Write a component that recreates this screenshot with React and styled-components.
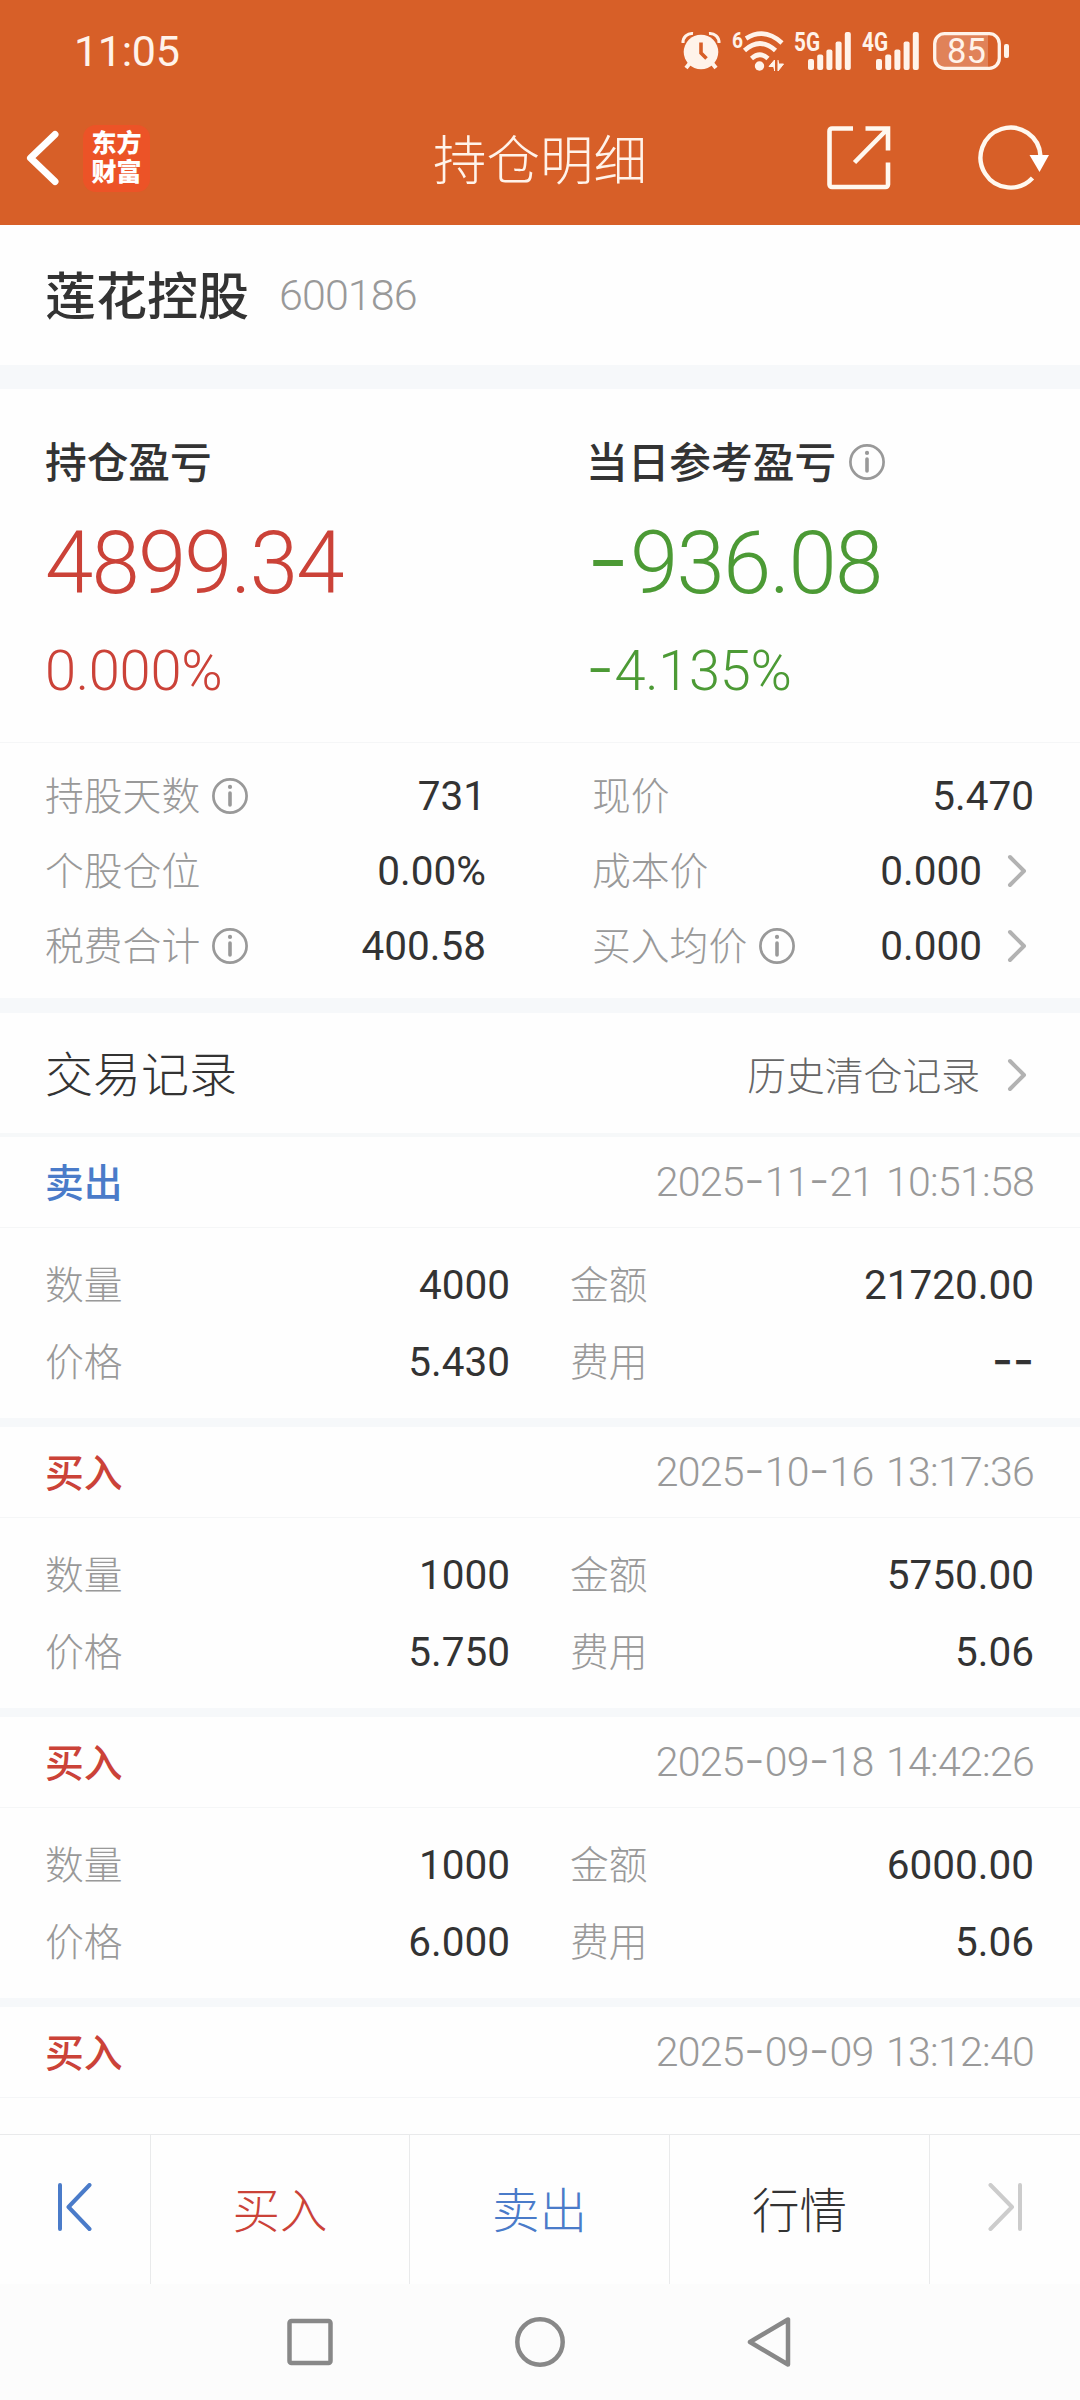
import React from 'react';
import styled, { createGlobalStyle } from 'styled-components';

const GlobalStyle = createGlobalStyle`
  * {
    box-sizing: border-box;
  }

  body {
    margin: 0;
    background: #fefefe;
    font-family: Roboto, 'Noto Sans CJK SC', sans-serif;
    color: #333;
  }
`;

const colors = {
  orange: '#d75f28',
  cream: '#fff3ea',
  red: '#cb4238',
  green: '#4c9a35',
  blue: '#4a7bc9',
  dark: '#333333',
  gray: '#999999',
};

// Styled components
const Screen = styled.div`
  width: 1080px;
  height: 2400px;
  display: flex;
  flex-direction: column;
  overflow: hidden;
`;

const Header = styled.header`
  height: 225px;
  flex: none;
  background: ${colors.orange};
`;

const StatusBar = styled.div`
  height: 102px;
  display: flex;
  align-items: center;
  justify-content: space-between;
  padding: 0 71px 0 74px;
`;

const Time = styled.span`
  font-size: 43px;
  line-height: 50px;
  letter-spacing: -0.3px;
  color: ${colors.cream};
`;

const StatusIcons = styled.div`
  display: flex;
  align-items: center;

  svg {
    display: block;
    overflow: visible;
  }
`;

const Spacer = styled.span`
  width: ${(props) => props.$w}px;
`;

const TitleBar = styled.div`
  height: 112px;
  display: grid;
  grid-template-columns: 1fr auto 1fr;
  align-items: center;
  padding: 0 30px 0 25px;
`;

const TitleLeft = styled.div`
  display: flex;
  align-items: center;
  gap: 21px;
`;

const TitleRight = styled.div`
  display: flex;
  align-items: center;
  justify-content: flex-end;
  gap: 87px;
`;

const Title = styled.h1`
  margin: 0;
  padding: 8px 0 0 5px;
  font-size: 53.5px;
  font-weight: 300;
  line-height: 60px;
  color: ${colors.cream};
`;

const AppBadge = styled.div`
  width: 67px;
  height: 67px;
  border-radius: 13px;
  background: #ec5327;
  color: #fff;
  display: grid;
  place-content: center;
  text-align: center;
  font-size: 25px;
  font-weight: 900;
  line-height: 29px;
`;

const StockBar = styled.div`
  height: 140px;
  flex: none;
  display: flex;
  align-items: center;
  gap: 30px;
  padding: 0 45px;
`;

const StockName = styled.span`
  padding-top: 5px;
  font-size: 51px;
  font-weight: 500;
  line-height: 60px;
`;

const StockCode = styled.span`
  font-size: 43px;
  font-weight: 300;
  line-height: 50px;
  letter-spacing: -0.9px;
  color: ${colors.gray};
`;

const Band = styled.div`
  flex: none;
  height: ${(props) => props.$size}px;
  background: #f6f8fa;
`;

// Han glyphs sit low in their line box
const Han = styled.span`
  padding-bottom: 5px;
`;

const Profits = styled.section`
  flex: none;
  height: 354px;
  display: grid;
  grid-template-columns: 541px 1fr;
  padding: 52px 45px 0;
  border-bottom: 1px solid #f5f6f7;
`;

const ProfitCaption = styled.div`
  height: 42px;
  display: flex;
  align-items: center;
  gap: 13px;
  font-size: 41.7px;
  font-weight: 500;
`;

const ProfitAmount = styled.div`
  margin-top: 30px;
  font-size: 87px;
  font-weight: 300;
  line-height: 100px;
  letter-spacing: -1.8px;
  color: ${(props) => props.$color};
`;

const ProfitRate = styled.div`
  margin-top: 28px;
  font-size: 56px;
  font-weight: 300;
  line-height: 60px;
  letter-spacing: -0.3px;
  color: ${(props) => props.$color};
`;

const Stats = styled.section`
  flex: none;
  height: 255px;
  display: grid;
  grid-template-columns: 441px 442px;
  grid-auto-rows: 75px;
  column-gap: 106px;
  padding: 15px 46px 0 45px;
`;

const Field = styled.div`
  display: flex;
  align-items: center;
  justify-content: space-between;
`;

const FieldLabel = styled.span`
  display: flex;
  align-items: center;
  gap: 12px;
  font-size: 38.8px;
  font-weight: 300;
  color: ${colors.gray};
`;

const FieldValue = styled.span`
  display: flex;
  align-items: center;
  font-size: 40.5px;
  font-weight: 450;
  letter-spacing: 0;
  color: ${colors.dark};

  svg {
    margin: 0 7px 0 25px;
  }
`;

const RecordsHead = styled.div`
  flex: none;
  height: 124px;
  display: flex;
  align-items: center;
  justify-content: space-between;
  padding: 0 46px 0 45px;
  border-bottom: 4px solid #f6f8f9;
`;

const RecordsTitle = styled.h2`
  margin: 0;
  padding-bottom: 4px;
  font-size: 48px;
  font-weight: 300;
`;

const HistoryLink = styled.a`
  display: flex;
  align-items: center;
  gap: 27px;
  padding: 4px 7px 0 0;
  font-size: 38.8px;
  font-weight: 300;
  color: #666;
`;

const RecordList = styled.div`
  flex: 1;
  min-height: 0;
  overflow: hidden;
`;

const RecordHead = styled.div`
  height: 91px;
  display: flex;
  align-items: center;
  justify-content: space-between;
  padding: 0 46px 0 45px;
  border-bottom: 1px solid #f5f6f7;
`;

const RecordType = styled(Han)`
  font-size: 38.8px;
  font-weight: 500;
  color: ${(props) => (props.$sell ? colors.blue : colors.red)};
`;

const RecordTime = styled.span`
  font-size: 41px;
  font-weight: 300;
  letter-spacing: -0.7px;
  word-spacing: 3px;
  color: ${colors.gray};
`;

const RecordBody = styled.div`
  height: 190px;
  display: grid;
  grid-template-columns: 465px 464px;
  grid-auto-rows: 77px;
  column-gap: 60px;
  padding: 18px 46px 18px 45px;
`;

const Hyphen = styled.span`
  font-family: Inter, sans-serif;
  font-size: 1.12em;
  line-height: 0;
  letter-spacing: 0;
`;

const TabBar = styled.nav`
  flex: none;
  height: 150px;
  display: grid;
  grid-template-columns: 151px 259px 260px 260px 150px;
  border-top: 1px solid #e9eaeb;
`;

const Tab = styled.button`
  display: flex;
  align-items: center;
  justify-content: center;
  padding: 0 0 5px;
  border: none;
  border-right: 1px solid #e9eaeb;
  background: none;
  font-family: inherit;
  font-size: 47.5px;
  font-weight: 300;
  color: ${(props) => props.$color};

  &:last-child {
    border-right: none;
  }
`;

const NavBar = styled.div`
  flex: none;
  height: 116px;
  display: flex;
  align-items: center;
  justify-content: center;
  gap: 179px;
  background: #fcfcfc;
`;

// Icons
const AlarmIcon = () => (
  <svg width="38" height="38" viewBox="0 0 38 38" fill={colors.cream}>
    <path d="M1 11A9 9 0 0 1 11 1.5" stroke={colors.cream} strokeWidth="3" fill="none" />
    <path d="M37 11A9 9 0 0 0 27 1.5" stroke={colors.cream} strokeWidth="3" fill="none" />
    <circle cx="19" cy="20" r="17.3" />
    <path d="M8 31l-4 5M30 31l4 5" stroke={colors.cream} strokeWidth="4" />
    <path d="M19 10.500v10.500l5.500 5.500" stroke={colors.orange} strokeWidth="3.600" fill="none" />
  </svg>
);

const WifiIcon = () => (
  <svg width="54" height="42" viewBox="0 0 54 42">
    <text x="0" y="18" fontSize="22" fontWeight="700" fontFamily="Roboto" textLength="11" lengthAdjust="spacingAndGlyphs" fill={colors.cream}>6</text>
    <g fill="none" stroke={colors.cream} strokeWidth="4.600">
      <path d="M14 8.500Q32.500 -3 50 13" />
      <path d="M12.500 20.500Q28 6.500 43.500 20.500" />
      <path d="M19.500 28.500Q28 21 36 28.500" />
    </g>
    <circle cx="27.500" cy="36" r="4.700" fill={colors.cream} />
    <path d="M42.500 41V30l-5.500 6.500h4M46 30v11l5.500-7h-4" fill={colors.cream} stroke={colors.cream} strokeWidth="1" />
  </svg>
);

const SignalIcon = ({ label }) => (
  <svg width="58" height="40" viewBox="0 0 58 40" fill={colors.cream}>
    <text x="0" y="20" fontSize="26" fontWeight="700" fontFamily="Roboto" textLength="26" lengthAdjust="spacingAndGlyphs">{label}</text>
    <rect x="14" y="28" width="6" height="11" rx="2" />
    <rect x="23.200" y="23.500" width="6" height="15.500" rx="2" />
    <rect x="32.400" y="18.500" width="6" height="20.500" rx="2" />
    <rect x="41.600" y="10.500" width="6" height="28.500" rx="2" />
    <rect x="50.800" y="1" width="6" height="38" rx="2" />
  </svg>
);

const BatteryIcon = () => (
  <svg width="76" height="38" viewBox="0 0 76 38">
    <path d="M12 3h43v32H12a9 9 0 0 1-9-9V12a9 9 0 0 1 9-9z" fill="#e08259" />
    <rect x="1.700" y="1.700" width="64.600" height="34.600" rx="10" fill="none" stroke={colors.cream} strokeWidth="3.300" />
    <rect x="71" y="12" width="5" height="14" rx="2" fill={colors.cream} />
    <text x="33.500" y="31" textAnchor="middle" fontSize="34.500" fontFamily="Roboto" fill={colors.cream}>85</text>
  </svg>
);

const BackIcon = () => (
  <svg width="37" height="60" viewBox="0 0 37 60" fill="none" stroke="#fff" strokeWidth="7" strokeLinecap="round" strokeLinejoin="round">
    <path d="M30 6.500L5.500 30L30 53.500" />
  </svg>
);

const ShareIcon = () => (
  <svg width="64" height="64" viewBox="0 0 64 64" fill="none" stroke="#fff8ef" strokeWidth="4.600">
    <path d="M26 2.500H5a2.500 2.500 0 0 0-2.500 2.500V58.500A2.500 2.500 0 0 0 5 61H58.500A2.500 2.500 0 0 0 61 58.500V36.500" />
    <path d="M38.500 2.500H61V24.500M61 2.500L27.500 36.500" />
  </svg>
);

const RefreshIcon = () => (
  <svg width="72" height="66" viewBox="0 0 72 66">
    <path d="M62.500 31A30 30 0 1 0 54.500 53" fill="none" stroke="#fff8ef" strokeWidth="4.400" />
    <path d="M51.500 30H71L61.500 47z" fill="#fff" />
  </svg>
);

const InfoIcon = () => (
  <svg width="36" height="36" viewBox="0 0 36 36" fill="none" stroke={colors.gray}>
    <circle cx="18" cy="18" r="16.600" strokeWidth="2.700" />
    <path d="M18 15v12" strokeWidth="3.600" strokeLinecap="round" />
    <circle cx="18" cy="8.900" r="2.100" fill={colors.gray} stroke="none" />
  </svg>
);

const ChevronIcon = () => (
  <svg width="20" height="34" viewBox="0 0 20 34" fill="none" stroke="#b2b2b2" strokeWidth="4" strokeLinecap="round" strokeLinejoin="round">
    <path d="M3 3l14 14L3 31" />
  </svg>
);

const FirstIcon = () => (
  <svg width="34" height="48" viewBox="0 0 34 48" fill="none" stroke={colors.blue} strokeWidth="4" strokeLinecap="round" strokeLinejoin="round">
    <path d="M2 2v44M31.500 2L10.500 24L31.500 46" />
  </svg>
);

const LastIcon = () => (
  <svg width="34" height="48" viewBox="0 0 34 48" fill="none" stroke="#ccc" strokeWidth="4" strokeLinecap="round" strokeLinejoin="round">
    <path d="M32 2v44M2.500 2L24 24L2.500 46" />
  </svg>
);

// Roboto's hyphen is too short next to figures
const Figures = ({ children }) =>
  children.split(/(-)/).map((part, i) => (part === '-' ? <Hyphen key={i}>-</Hyphen> : part));

const stats = [
  { label: '持股天数', value: '731', info: true },
  { label: '现价', value: '5.470' },
  { label: '个股仓位', value: '0.00%' },
  { label: '成本价', value: '0.000', link: true },
  { label: '税费合计', value: '400.58', info: true },
  { label: '买入均价', value: '0.000', info: true, link: true },
];

const records = [
  { sell: true, time: '2025-11-21 10:51:58', count: '4000', amount: '21720.00', price: '5.430', fee: '--' },
  { time: '2025-10-16 13:17:36', count: '1000', amount: '5750.00', price: '5.750', fee: '5.06' },
  { time: '2025-09-18 14:42:26', count: '1000', amount: '6000.00', price: '6.000', fee: '5.06' },
  { time: '2025-09-09 13:12:40' },
];

const Item = ({ label, value, info, link }) => (
  <Field>
    <FieldLabel>
      <Han>{label}</Han>
      {info && <InfoIcon />}
    </FieldLabel>
    <FieldValue>
      <span><Figures>{value}</Figures></span>
      {link && <ChevronIcon />}
    </FieldValue>
  </Field>
);

const Record = ({ record }) => (
  <>
    <RecordHead>
      <RecordType $sell={record.sell}>{record.sell ? '卖出' : '买入'}</RecordType>
      <RecordTime><Figures>{record.time}</Figures></RecordTime>
    </RecordHead>
    {record.count && (
      <>
        <RecordBody>
          <Item label="数量" value={record.count} />
          <Item label="金额" value={record.amount} />
          <Item label="价格" value={record.price} />
          <Item label="费用" value={record.fee} />
        </RecordBody>
        <Band $size={9} />
      </>
    )}
  </>
);

// Component
const App = () => {
  return (
    <Screen>
      <GlobalStyle />
      <Header>
        <StatusBar>
          <Time>11:05</Time>
          <StatusIcons>
            <AlarmIcon />
            <Spacer $w={12} />
            <WifiIcon />
            <Spacer $w={8} />
            <SignalIcon label="5G" />
            <Spacer $w={10} />
            <SignalIcon label="4G" />
            <Spacer $w={13} />
            <BatteryIcon />
          </StatusIcons>
        </StatusBar>
        <TitleBar>
          <TitleLeft>
            <BackIcon />
            <AppBadge>东方<br />财富</AppBadge>
          </TitleLeft>
          <Title>持仓明细</Title>
          <TitleRight>
            <ShareIcon />
            <RefreshIcon />
          </TitleRight>
        </TitleBar>
      </Header>

      <StockBar>
        <StockName>莲花控股</StockName>
        <StockCode>600186</StockCode>
      </StockBar>
      <Band $size={24} />

      <Profits>
        <div>
          <ProfitCaption><Han>持仓盈亏</Han></ProfitCaption>
          <ProfitAmount $color={colors.red}>4899.34</ProfitAmount>
          <ProfitRate $color={colors.red}>0.000%</ProfitRate>
        </div>
        <div>
          <ProfitCaption><Han>当日参考盈亏</Han><InfoIcon /></ProfitCaption>
          <ProfitAmount $color={colors.green}><Figures>-936.08</Figures></ProfitAmount>
          <ProfitRate $color={colors.green}><Figures>-4.135%</Figures></ProfitRate>
        </div>
      </Profits>

      <Stats>
        {stats.map((item) => (
          <Item key={item.label} {...item} />
        ))}
      </Stats>
      <Band $size={15} />

      <RecordsHead>
        <RecordsTitle>交易记录</RecordsTitle>
        <HistoryLink><Han>历史清仓记录</Han><ChevronIcon /></HistoryLink>
      </RecordsHead>
      <RecordList>
        {records.map((record) => (
          <Record key={record.time} record={record} />
        ))}
      </RecordList>

      <TabBar>
        <Tab><FirstIcon /></Tab>
        <Tab $color={colors.red}>买入</Tab>
        <Tab $color={colors.blue}>卖出</Tab>
        <Tab $color={colors.dark}>行情</Tab>
        <Tab><LastIcon /></Tab>
      </TabBar>
      <NavBar>
        <svg width="50" height="52" viewBox="0 0 50 52" fill="none" stroke="#888" strokeWidth="4.500">
          <rect x="4.500" y="5" width="41" height="42" rx="2" />
        </svg>
        <svg width="52" height="52" viewBox="0 0 52 52" fill="none" stroke="#888" strokeWidth="4.500">
          <circle cx="26" cy="26" r="22.700" />
        </svg>
        <svg width="50" height="52" viewBox="0 0 50 52" fill="none" stroke="#888" strokeWidth="4.500" strokeLinejoin="round">
          <path d="M43 3.500V48.500L5 26z" />
        </svg>
      </NavBar>
    </Screen>
  );
};

export default App;
